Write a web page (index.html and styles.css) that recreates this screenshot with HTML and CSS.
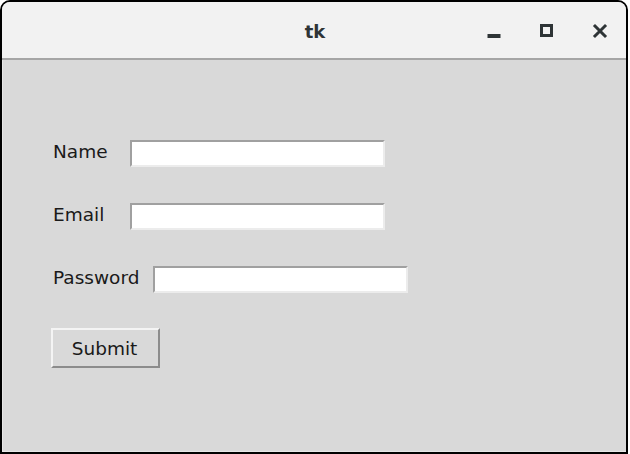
FILE: index.html
```html
<!DOCTYPE html>
<html>
<head>
<meta charset="utf-8">
<link rel="stylesheet" href="styles.css">
</head>
<body>
<div class="window">
  <div class="titlebar">
    <div class="title">tk</div>
    <div class="controls">
      <span class="ctl ctl-min"><svg width="14" height="14" viewBox="0 0 14 14"><rect x="0.5" y="9" width="13" height="4" fill="#2e3436"/></svg></span>
      <span class="ctl ctl-max"><svg width="14" height="14" viewBox="0 0 14 14"><rect x="1.5" y="1.5" width="10" height="10" fill="none" stroke="#2e3436" stroke-width="3"/></svg></span>
      <span class="ctl ctl-close"><svg width="16" height="16" viewBox="0 0 16 16"><path d="M3 3 L13 13 M13 3 L3 13" stroke="#2e3436" stroke-width="3" stroke-linecap="square"/></svg></span>
    </div>
  </div>
  <div class="content">
    <div class="row">
      <label class="label">Name</label>
      <div class="entry"></div>
    </div>
    <div class="row">
      <label class="label">Email</label>
      <div class="entry"></div>
    </div>
    <div class="row">
      <label class="label">Password</label>
      <div class="entry"></div>
    </div>
    <div class="btn-row">
      <button class="button">Submit</button>
    </div>
  </div>
</div>
</body>
</html>
```
FILE: styles.css
```css
html, body {
  margin: 0;
  padding: 0;
  background: #ffffff;
}
.window {
  box-sizing: border-box;
  width: 628px;
  height: 454px;
  border: 2px solid #000;
  border-radius: 10px 10px 0 0;
  overflow: hidden;
  display: flex;
  flex-direction: column;
  background: #d9d9d9;
  font-family: "DejaVu Sans", sans-serif;
}
.titlebar {
  height: 58px;
  flex: none;
  background: #f2f2f2;
  border-bottom: 2px solid #a6a6a6;
  box-sizing: border-box;
  display: flex;
  align-items: center;
  justify-content: center;
  position: relative;
}
.title {
  font-weight: bold;
  font-size: 18px;
  color: #2e3436;
  margin-left: 2px;
  margin-top: 2px;
}
.controls {
  position: absolute;
  right: 0;
  top: 0;
  height: 100%;
  display: flex;
  align-items: center;
}
.ctl {
  display: flex;
  width: 53px;
  justify-content: center;
}
.ctl-min { margin-top: 3px; }
.ctl-max { margin-top: 2px; }
.ctl-close { margin-top: 1px; }
.content {
  flex: 1;
  box-sizing: border-box;
  padding: 80px 0 0 50px;
  border-left: 1px solid #e6e6e6;
  border-bottom: 1px solid #e6e6e6;
  display: flex;
  flex-direction: column;
  gap: 36px;
}
.row {
  display: flex;
  align-items: center;
  height: 27px;
}
.label {
  flex: none;
  font-size: 18.5px;
  color: #1a1a1a;
  min-width: 63px;
  padding-right: 14px;
  margin-top: -4px;
}
.entry {
  flex: none;
  box-sizing: border-box;
  width: 255px;
  height: 27px;
  background: #ffffff;
  border-top: 2px solid #a0a0a0;
  border-left: 2px solid #a0a0a0;
  border-right: 2px solid #ececec;
  border-bottom: 2px solid #ececec;
}
.btn-row {
  display: flex;
  margin-top: -1px;
}
.button {
  box-sizing: border-box;
  width: 109px;
  height: 40px;
  background: #d9d9d9;
  font-family: "DejaVu Sans", sans-serif;
  font-size: 18.5px;
  color: #1a1a1a;
  border-top: 2px solid #f4f4f4;
  border-left: 2px solid #f4f4f4;
  border-right: 2px solid #8c8c8c;
  border-bottom: 2px solid #8c8c8c;
  padding: 0 2px 0 0;
  margin-left: -2px;
}
```
